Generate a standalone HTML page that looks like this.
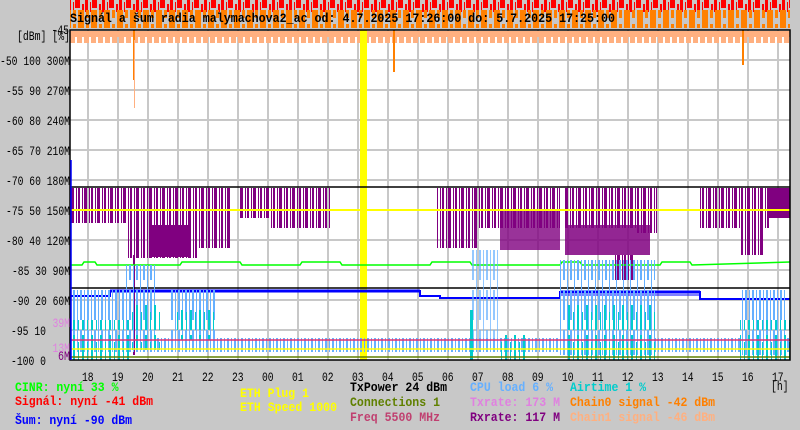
<!DOCTYPE html>
<html><head><meta charset="utf-8"><style>
html,body{margin:0;padding:0;background:#c8c8c8;width:800px;height:430px;overflow:hidden}
svg{display:block}
text{font-family:"Liberation Mono","DejaVu Sans Mono",monospace;font-size:13px}
.b{font-weight:bold;font-size:12.5px}
</style></head><body>
<svg width="800" height="430" xmlns="http://www.w3.org/2000/svg">
<defs>
<pattern id="pp" width="13" height="10" patternUnits="userSpaceOnUse">
<rect x="0" y="0" width="2" height="10" fill="#800080"/><rect x="4" y="0" width="1" height="10" fill="#800080"/><rect x="6" y="0" width="3" height="10" fill="#800080"/><rect x="11" y="0" width="1" height="10" fill="#800080"/></pattern>
<pattern id="pr" width="17" height="12" patternUnits="userSpaceOnUse">
<rect x="0" y="0" width="3" height="12" fill="#ff0000"/><rect x="5" y="2" width="1" height="10" fill="#ff0000"/><rect x="7" y="0" width="5" height="8" fill="#ff0000"/><rect x="14" y="4" width="2" height="8" fill="#ff0000"/></pattern>
<pattern id="po" width="13" height="20" patternUnits="userSpaceOnUse">
<rect x="0" y="0" width="6" height="20" fill="#ff8000"/><rect x="8" y="4" width="3" height="14" fill="#ff8000"/></pattern>
<pattern id="plo" width="7" height="5" patternUnits="userSpaceOnUse">
<rect x="0" y="0" width="5" height="5" fill="#ffb080"/></pattern>
<pattern id="pb" width="7" height="40" patternUnits="userSpaceOnUse">
<rect x="0" y="0" width="1" height="40" fill="#66b0ff"/><rect x="3" y="10" width="2" height="30" fill="#66b0ff"/></pattern>
<pattern id="pc" width="9" height="30" patternUnits="userSpaceOnUse">
<rect x="1" y="5" width="2" height="25" fill="#00cccc"/><rect x="6" y="12" width="1" height="18" fill="#00cccc"/></pattern>
</defs>
<rect x="70" y="0" width="720" height="12" fill="url(#pr)"/>
<rect x="70" y="10" width="720" height="18" fill="url(#po)"/>
<rect x="70" y="30" width="720" height="330" fill="#fff"/>
<g stroke="#c8c8c8" stroke-width="2">
<line x1="88" y1="30" x2="88" y2="360"/><line x1="118" y1="30" x2="118" y2="360"/><line x1="148" y1="30" x2="148" y2="360"/><line x1="178" y1="30" x2="178" y2="360"/><line x1="208" y1="30" x2="208" y2="360"/><line x1="238" y1="30" x2="238" y2="360"/><line x1="268" y1="30" x2="268" y2="360"/><line x1="298" y1="30" x2="298" y2="360"/><line x1="328" y1="30" x2="328" y2="360"/><line x1="358" y1="30" x2="358" y2="360"/><line x1="388" y1="30" x2="388" y2="360"/><line x1="418" y1="30" x2="418" y2="360"/><line x1="448" y1="30" x2="448" y2="360"/><line x1="478" y1="30" x2="478" y2="360"/><line x1="508" y1="30" x2="508" y2="360"/><line x1="538" y1="30" x2="538" y2="360"/><line x1="568" y1="30" x2="568" y2="360"/><line x1="598" y1="30" x2="598" y2="360"/><line x1="628" y1="30" x2="628" y2="360"/><line x1="658" y1="30" x2="658" y2="360"/><line x1="688" y1="30" x2="688" y2="360"/><line x1="718" y1="30" x2="718" y2="360"/><line x1="748" y1="30" x2="748" y2="360"/><line x1="778" y1="30" x2="778" y2="360"/>
<line x1="70" y1="60" x2="790" y2="60"/><line x1="70" y1="90" x2="790" y2="90"/><line x1="70" y1="120" x2="790" y2="120"/><line x1="70" y1="150" x2="790" y2="150"/><line x1="70" y1="180" x2="790" y2="180"/><line x1="70" y1="210" x2="790" y2="210"/><line x1="70" y1="240" x2="790" y2="240"/><line x1="70" y1="270" x2="790" y2="270"/><line x1="70" y1="300" x2="790" y2="300"/><line x1="70" y1="330" x2="790" y2="330"/>
</g>
<rect x="70" y="31" width="720" height="6" fill="#ffb080"/>
<rect x="70" y="36" width="720" height="7" fill="url(#plo)"/>
<rect x="133" y="30" width="2" height="50" fill="#ff8000"/><rect x="134" y="40" width="1" height="68" fill="#ffb080"/>
<rect x="393" y="30" width="2" height="42" fill="#ff8000"/>
<rect x="742" y="30" width="2" height="35" fill="#ff8000"/>
<rect x="360" y="30" width="7" height="330" fill="#ffff00"/>
<line x1="70" y1="187" x2="790" y2="187" stroke="#000" stroke-width="1.5"/>
<rect x="71" y="188" width="56" height="35" fill="url(#pp)"/>
<rect x="127" y="188" width="70" height="70" fill="url(#pp)"/>
<rect x="150" y="225" width="40" height="32" fill="#800080"/>
<rect x="197" y="188" width="34" height="60" fill="url(#pp)"/>
<rect x="240" y="188" width="30" height="30" fill="url(#pp)"/>
<rect x="270" y="188" width="60" height="40" fill="url(#pp)"/>
<rect x="437" y="188" width="40" height="60" fill="url(#pp)"/>
<rect x="470" y="188" width="90" height="40" fill="url(#pp)"/>
<rect x="500" y="210" width="60" height="40" fill="#800080" opacity=".8"/>
<rect x="565" y="188" width="85" height="40" fill="url(#pp)"/>
<rect x="565" y="225" width="85" height="30" fill="#800080" opacity=".85"/>
<rect x="615" y="255" width="20" height="25" fill="url(#pp)"/>
<rect x="637" y="188" width="20" height="45" fill="url(#pp)"/>
<rect x="700" y="188" width="70" height="40" fill="url(#pp)"/>
<rect x="768" y="188" width="22" height="30" fill="#800080"/>
<rect x="740" y="215" width="25" height="40" fill="url(#pp)"/>
<rect x="133" y="255" width="2" height="100" fill="#800080"/>
<line x1="70" y1="210" x2="790" y2="210" stroke="#ffff00" stroke-width="2"/>
<polyline fill="none" stroke="#00ff00" stroke-width="1.5" points="70,265 82,265 84,262 95,262 97,265 180,265 182,262 240,262 242,265 300,265 302,262 340,262 342,265 430,265 432,262 470,262 472,265 560,265 562,262 580,262 582,265 660,265 662,262 690,262 692,265 790,262"/>
<line x1="70" y1="288" x2="790" y2="288" stroke="#000" stroke-width="1.5"/>
<polyline fill="none" stroke="#0000ff" stroke-width="2" points="70,296 110,296 110,291 420,291 420,296 440,296 440,298 560,298 560,292 700,292 700,299 790,299"/>
<rect x="110" y="289" width="310" height="4" fill="#0000ff" opacity=".5"/>
<rect x="560" y="290" width="140" height="6" fill="#0000ff" opacity=".5"/>
<rect x="70" y="338" width="720" height="14" fill="url(#pb)"/>
<rect x="70" y="290" width="60" height="60" fill="url(#pb)"/>
<rect x="125" y="265" width="30" height="85" fill="url(#pb)"/>
<rect x="170" y="290" width="45" height="50" fill="url(#pb)"/>
<rect x="470" y="250" width="30" height="100" fill="url(#pb)" opacity=".7"/>
<rect x="560" y="260" width="95" height="95" fill="url(#pb)"/>
<rect x="565" y="300" width="90" height="60" fill="url(#pc)"/>
<rect x="740" y="290" width="45" height="65" fill="url(#pb)"/>
<rect x="740" y="320" width="50" height="40" fill="url(#pc)"/>
<rect x="70" y="320" width="60" height="40" fill="url(#pc)"/>
<rect x="130" y="300" width="30" height="50" fill="url(#pc)"/>
<rect x="175" y="310" width="40" height="30" fill="url(#pc)"/>
<rect x="500" y="335" width="25" height="25" fill="url(#pc)"/>
<rect x="470" y="310" width="3" height="50" fill="#00cccc"/>
<line x1="70" y1="340" x2="790" y2="340" stroke="#e03070" stroke-width="1.5"/>
<line x1="70" y1="349" x2="790" y2="349" stroke="#ffff00" stroke-width="1.5"/>
<line x1="70" y1="357" x2="790" y2="357" stroke="#608000" stroke-width="1.5"/>
<rect x="70" y="30" width="720" height="330" fill="none" stroke="#000" stroke-width="1.5"/>
<line x1="71" y1="160" x2="71" y2="360" stroke="#0000ff" stroke-width="1.5"/>
<text x="70" y="22" class="b" fill="#000" textLength="545" lengthAdjust="spacingAndGlyphs">Signál a šum radia malymachova2_ac od: 4.7.2025 17:26:00 do: 5.7.2025 17:25:00</text>
<g fill="#000" text-anchor="end">
<text x="69" y="34" textLength="17.5" lengthAdjust="spacingAndGlyphs">-45</text>
<text x="70" y="40" textLength="53" lengthAdjust="spacingAndGlyphs">[dBm] [%]</text>
<text x="70" y="65" textLength="70" lengthAdjust="spacingAndGlyphs">-50 100 300M</text>
<text x="70" y="95" textLength="64" lengthAdjust="spacingAndGlyphs">-55 90 270M</text>
<text x="70" y="125" textLength="64" lengthAdjust="spacingAndGlyphs">-60 80 240M</text>
<text x="70" y="155" textLength="64" lengthAdjust="spacingAndGlyphs">-65 70 210M</text>
<text x="70" y="185" textLength="64" lengthAdjust="spacingAndGlyphs">-70 60 180M</text>
<text x="70" y="215" textLength="64" lengthAdjust="spacingAndGlyphs">-75 50 150M</text>
<text x="70" y="245" textLength="64" lengthAdjust="spacingAndGlyphs">-80 40 120M</text>
<text x="70" y="275" textLength="58" lengthAdjust="spacingAndGlyphs">-85 30 90M</text>
<text x="70" y="305" textLength="58" lengthAdjust="spacingAndGlyphs">-90 20 60M</text>
<text x="46" y="335" textLength="35" lengthAdjust="spacingAndGlyphs">-95 10</text>
<text x="46" y="365" textLength="35" lengthAdjust="spacingAndGlyphs">-100 0</text>
</g>
<text x="70" y="327" text-anchor="end" fill="#e080e0" textLength="17.5" lengthAdjust="spacingAndGlyphs">39M</text>
<text x="70" y="352" text-anchor="end" fill="#e080e0" textLength="17.5" lengthAdjust="spacingAndGlyphs">13M</text>
<text x="70" y="360" text-anchor="end" fill="#800080" textLength="12" lengthAdjust="spacingAndGlyphs">6M</text>
<g fill="#000">
<text x="82" y="381" textLength="11.6" lengthAdjust="spacingAndGlyphs">18</text><text x="112" y="381" textLength="11.6" lengthAdjust="spacingAndGlyphs">19</text><text x="142" y="381" textLength="11.6" lengthAdjust="spacingAndGlyphs">20</text><text x="172" y="381" textLength="11.6" lengthAdjust="spacingAndGlyphs">21</text><text x="202" y="381" textLength="11.6" lengthAdjust="spacingAndGlyphs">22</text><text x="232" y="381" textLength="11.6" lengthAdjust="spacingAndGlyphs">23</text><text x="262" y="381" textLength="11.6" lengthAdjust="spacingAndGlyphs">00</text><text x="292" y="381" textLength="11.6" lengthAdjust="spacingAndGlyphs">01</text><text x="322" y="381" textLength="11.6" lengthAdjust="spacingAndGlyphs">02</text><text x="352" y="381" textLength="11.6" lengthAdjust="spacingAndGlyphs">03</text><text x="382" y="381" textLength="11.6" lengthAdjust="spacingAndGlyphs">04</text><text x="412" y="381" textLength="11.6" lengthAdjust="spacingAndGlyphs">05</text><text x="442" y="381" textLength="11.6" lengthAdjust="spacingAndGlyphs">06</text><text x="472" y="381" textLength="11.6" lengthAdjust="spacingAndGlyphs">07</text><text x="502" y="381" textLength="11.6" lengthAdjust="spacingAndGlyphs">08</text><text x="532" y="381" textLength="11.6" lengthAdjust="spacingAndGlyphs">09</text><text x="562" y="381" textLength="11.6" lengthAdjust="spacingAndGlyphs">10</text><text x="592" y="381" textLength="11.6" lengthAdjust="spacingAndGlyphs">11</text><text x="622" y="381" textLength="11.6" lengthAdjust="spacingAndGlyphs">12</text><text x="652" y="381" textLength="11.6" lengthAdjust="spacingAndGlyphs">13</text><text x="682" y="381" textLength="11.6" lengthAdjust="spacingAndGlyphs">14</text><text x="712" y="381" textLength="11.6" lengthAdjust="spacingAndGlyphs">15</text><text x="742" y="381" textLength="11.6" lengthAdjust="spacingAndGlyphs">16</text><text x="772" y="381" textLength="11.6" lengthAdjust="spacingAndGlyphs">17</text>
<text x="771" y="390" textLength="17.5" lengthAdjust="spacingAndGlyphs">[h]</text>
</g>
<g class="b" lengthAdjust="spacingAndGlyphs">
<text x="15" y="391" fill="#00ff00" textLength="103.5" lengthAdjust="spacingAndGlyphs">CINR: nyní 33 %</text>
<text x="15" y="405" fill="#ff0000" textLength="138" lengthAdjust="spacingAndGlyphs">Signál: nyní -41 dBm</text>
<text x="15" y="424" fill="#0000ff" textLength="117" lengthAdjust="spacingAndGlyphs">Šum: nyní -90 dBm</text>
<text x="240" y="397" fill="#ffff00" textLength="69" lengthAdjust="spacingAndGlyphs">ETH Plug 1</text>
<text x="240" y="411" fill="#ffff00" textLength="97" lengthAdjust="spacingAndGlyphs">ETH Speed 1000</text>
<text x="350" y="391" fill="#000" textLength="97" lengthAdjust="spacingAndGlyphs">TxPower 24 dBm</text>
<text x="350" y="406" fill="#608000" textLength="90" lengthAdjust="spacingAndGlyphs">Connections 1</text>
<text x="350" y="421" fill="#c04070" textLength="90" lengthAdjust="spacingAndGlyphs">Freq 5500 MHz</text>
<text x="470" y="391" fill="#66b0ff" textLength="83" lengthAdjust="spacingAndGlyphs">CPU load 6 %</text>
<text x="470" y="406" fill="#e080e0" textLength="90" lengthAdjust="spacingAndGlyphs">Txrate: 173 M</text>
<text x="470" y="421" fill="#800080" textLength="90" lengthAdjust="spacingAndGlyphs">Rxrate: 117 M</text>
<text x="570" y="391" fill="#00cccc" textLength="76" lengthAdjust="spacingAndGlyphs">Airtime 1 %</text>
<text x="570" y="406" fill="#ff8000" textLength="145" lengthAdjust="spacingAndGlyphs">Chain0 signal -42 dBm</text>
<text x="570" y="421" fill="#ffb080" textLength="145" lengthAdjust="spacingAndGlyphs">Chain1 signal -46 dBm</text>
</g>
</svg>
</body></html>
